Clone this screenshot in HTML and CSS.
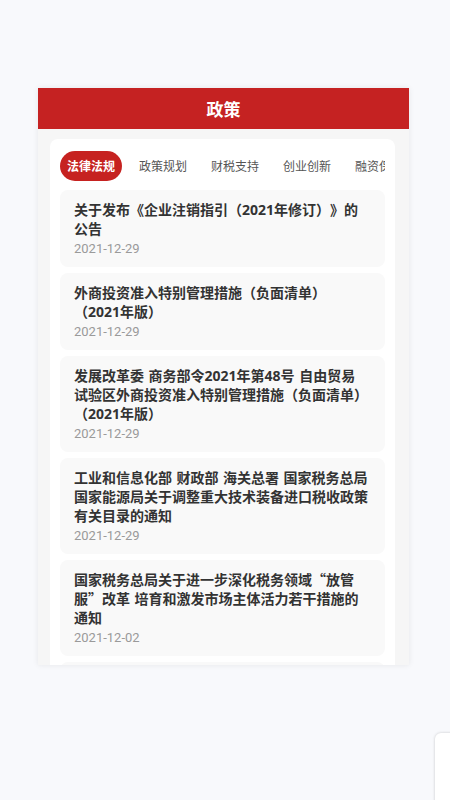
FILE: index.html
```html
<!DOCTYPE html>
<html lang="zh-CN">
<head>
<meta charset="utf-8">
<title>政策</title>
<link rel="stylesheet" href="styles.css">
</head>
<body>
<div class="phone">
  <header class="bar">政策</header>
  <main class="body">
    <section class="panel">
      <nav class="tabs">
        <span class="tab active">法律法规</span>
        <span class="tab">政策规划</span>
        <span class="tab">财税支持</span>
        <span class="tab">创业创新</span>
        <span class="tab">融资保障</span>
        <span class="tab">人才服务</span>
      </nav>
      <ul class="list">
        <li class="item">
          <p class="title">关于发布《企业注销指引（2021年修订）》的公告</p>
          <p class="date">2021-12-29</p>
        </li>
        <li class="item">
          <p class="title">外商投资准入特别管理措施（负面清单）（2021年版）</p>
          <p class="date">2021-12-29</p>
        </li>
        <li class="item">
          <p class="title">发展改革委 商务部令2021年第48号 自由贸易试验区外商投资准入特别管理措施（负面清单）（2021年版）</p>
          <p class="date">2021-12-29</p>
        </li>
        <li class="item">
          <p class="title">工业和信息化部 财政部 海关总署 国家税务总局 国家能源局关于调整重大技术装备进口税收政策有关目录的通知</p>
          <p class="date">2021-12-29</p>
        </li>
        <li class="item">
          <p class="title">国家税务总局关于进一步深化税务领域<span class="cjk">“</span>放管服<span class="cjk">”</span>改革 培育和激发市场主体活力若干措施的通知</p>
          <p class="date">2021-12-02</p>
        </li>
        <li class="item">
          <p class="title">国务院关于开展营商环境创新试点工作的意见</p>
          <p class="date">2021-11-25</p>
        </li>
      </ul>
    </section>
  </main>
</div>
<div class="corner"></div>
</body>
</html>
```

FILE: styles.css
```css
html, body {
  margin: 0;
  padding: 0;
}
body {
  background: #f8f9fc;
  font-family: "Noto Sans CJK SC", "Noto Sans", sans-serif;
  height: 800px;
  overflow: hidden;
}
.phone {
  margin: 88px 0 0 38px;
  width: 371px;
  height: 577px;
  background: #f6f6f6;
  box-shadow: 0 0 6px rgba(0, 0, 0, 0.08);
  overflow: hidden;
  display: flex;
  flex-direction: column;
}
.bar {
  flex: none;
  height: 41px;
  background: #c52222;
  color: #fff;
  font-weight: 700;
  font-size: 17px;
  display: flex;
  align-items: center;
  justify-content: center;
}
.body {
  padding: 10px 14px 0 12px;
}
.panel {
  background: #fff;
  border-radius: 8px;
  padding: 12px 10px 10px;
}
.tabs {
  display: flex;
  gap: 10px;
  overflow: hidden;
  white-space: nowrap;
  margin-bottom: 9px;
}
.tab {
  flex: none;
  height: 30px;
  line-height: 30px;
  padding: 0 7px;
  font-size: 12px;
  color: #555;
  border-radius: 15px;
}
.tab.active {
  background: #c62220;
  color: #fff;
  font-weight: 700;
}
.list {
  list-style: none;
  margin: 0;
  padding: 0;
  display: flex;
  flex-direction: column;
  gap: 6px;
}
.item {
  background: #f9f9f9;
  border-radius: 8px;
  padding: 10px 16.5px 10px 14px;
}
.title {
  margin: 0;
  font-family: "Noto Sans", "Noto Sans CJK SC", sans-serif;
  font-size: 14px;
  line-height: 19px;
  font-weight: 700;
  color: #333;
  line-break: strict;
  text-spacing-trim: space-all;
  word-spacing: 0.9px;
}
.cjk {
  font-family: "Noto Sans CJK SC", sans-serif;
}
.date {
  margin: 2px 0 0;
  font-family: Roboto, "Noto Sans", sans-serif;
  font-size: 13px;
  line-height: 17px;
  color: #9a9a9a;
}
.corner {
  position: fixed;
  left: 435px;
  top: 733px;
  width: 40px;
  height: 100px;
  background: #fff;
  border-radius: 6px 0 0 0;
  box-shadow: 0 0 3px rgba(0, 0, 0, 0.2);
}
```
